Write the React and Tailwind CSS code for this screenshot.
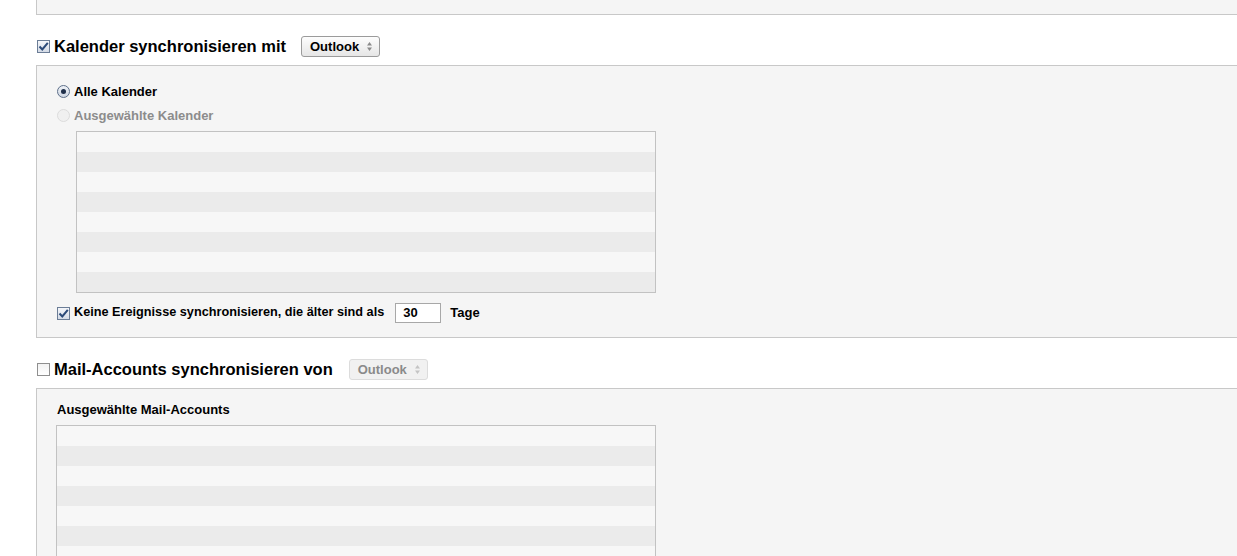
import { useState } from 'react';

const font = { fontFamily: '"Liberation Sans", Arial, sans-serif' };

const Checkbox = ({ checked, onChange }) => (
  <button
    onClick={onChange}
    className={`w-[13px] h-[13px] border flex items-center justify-center shrink-0 ${
      checked ? 'border-[#6b7d96] bg-gradient-to-b from-[#f4f6fa] to-[#d4dbe6]' : 'border-[#8f8f8f] bg-gradient-to-b from-[#f2f2f2] to-[#ffffff]'
    }`}
  >
    {checked && (
      <svg width="11" height="11" viewBox="0 0 11 11">
        <path d="M1.5 5.5 L4.3 8.5 L9.8 1.8" fill="none" stroke="#2b4a78" strokeWidth="2" />
      </svg>
    )}
  </button>
);

const Radio = ({ checked, disabled }) => (
  <span
    className={`w-[13px] h-[13px] rounded-full border flex items-center justify-center shrink-0 ${
      disabled ? 'border-[#dcdcdc] bg-[#f0f0f0]' : 'border-[#5d6f89] bg-gradient-to-b from-[#eef1f6] to-[#cfd7e3]'
    }`}
  >
    {checked && <span className="w-[5px] h-[5px] rounded-full bg-[#1f2f4a]" />}
  </span>
);

const Select = ({ disabled }) => (
  <div
    className={`h-[21px] pl-[8px] pr-[7px] rounded-[3px] border flex items-center gap-[8px] text-[13px] font-bold ${
      disabled
        ? 'border-[#dcdcdc] bg-[#f1f1f1] text-[#8a8a8a]'
        : 'border-[#9b9b9b] bg-gradient-to-b from-[#fdfdfd] to-[#e6e6e6] text-black'
    }`}
  >
    <span>Outlook</span>
    <svg width="5" height="9" viewBox="0 0 5 9">
      <path d="M2.5 0 L5 3.5 L0 3.5 Z M2.5 9 L5 5.5 L0 5.5 Z" fill={disabled ? '#c4c4c4' : '#8a8a8a'} />
    </svg>
  </div>
);

const StripedList = ({ rows, className }) => (
  <div className={`border border-[#c2c2c2] ${className}`}>
    {Array.from({ length: rows }).map((_, i) => (
      <div key={i} className={`h-[20px] ${i % 2 === 0 ? 'bg-[#f7f7f7]' : 'bg-[#ebebeb]'}`} />
    ))}
  </div>
);

export default function App() {
  const [calSync, setCalSync] = useState(true);
  const [limitOld, setLimitOld] = useState(true);
  const [mailSync, setMailSync] = useState(false);

  return (
    <div className="w-[1237px] h-[556px] overflow-hidden bg-white pl-[36px]" style={font}>
      {/* vorheriger Bereich */}
      <div className="h-[15px] bg-[#f5f5f5] border-l border-b border-[#c8c8c8]" />

      {/* Kalender */}
      <div className="h-[50px] flex items-center pl-[1px] pt-[13px]">
        <Checkbox checked={calSync} onChange={() => setCalSync(!calSync)} />
        <span className="ml-[4px] text-[16.5px] font-bold text-black">Kalender synchronisieren mit</span>
        <div className="ml-[15px]">
          <Select />
        </div>
      </div>
      <div className="h-[273px] bg-[#f5f5f5] border-l border-y border-[#c8c8c8] pl-[20px] pt-[17px]">
        <div className="flex items-center gap-[4px] h-[17px] text-[13px] font-bold text-black">
          <Radio checked />
          <span>Alle Kalender</span>
        </div>
        <div className="flex items-center gap-[4px] h-[17px] mt-[7px] text-[13px] font-bold text-[#8c8c8c]">
          <Radio disabled />
          <span>Ausgewählte Kalender</span>
        </div>
        <StripedList rows={8} className="ml-[19px] mt-[7px] w-[580px]" />
        <div className="flex items-center mt-[10px] text-[12.7px] font-bold text-black">
          <Checkbox checked={limitOld} onChange={() => setLimitOld(!limitOld)} />
          <span className="ml-[4px]">Keine Ereignisse synchronisieren, die älter sind als</span>
          <div className="ml-[11px] w-[46px] h-[20px] border border-[#a8a8a8] bg-white pl-[7px] flex items-center text-[13px]">30</div>
          <span className="ml-[9px] text-[13px]">Tage</span>
        </div>
      </div>

      {/* Mail-Accounts */}
      <div className="h-[50px] flex items-center pl-[1px] pt-[13px]">
        <Checkbox checked={mailSync} onChange={() => setMailSync(!mailSync)} />
        <span className="ml-[4px] text-[16.5px] font-bold text-black">Mail-Accounts synchronisieren von</span>
        <div className="ml-[16px]">
          <Select disabled />
        </div>
      </div>
      <div className="h-[200px] bg-[#f5f5f5] border-l border-t border-[#c8c8c8] pl-[20px] pt-[12px]">
        <div className="h-[17px] flex items-center text-[13px] font-bold text-black">Ausgewählte Mail-Accounts</div>
        <StripedList rows={8} className="mt-[7px] ml-[-1px] w-[600px]" />
      </div>
    </div>
  );
}
